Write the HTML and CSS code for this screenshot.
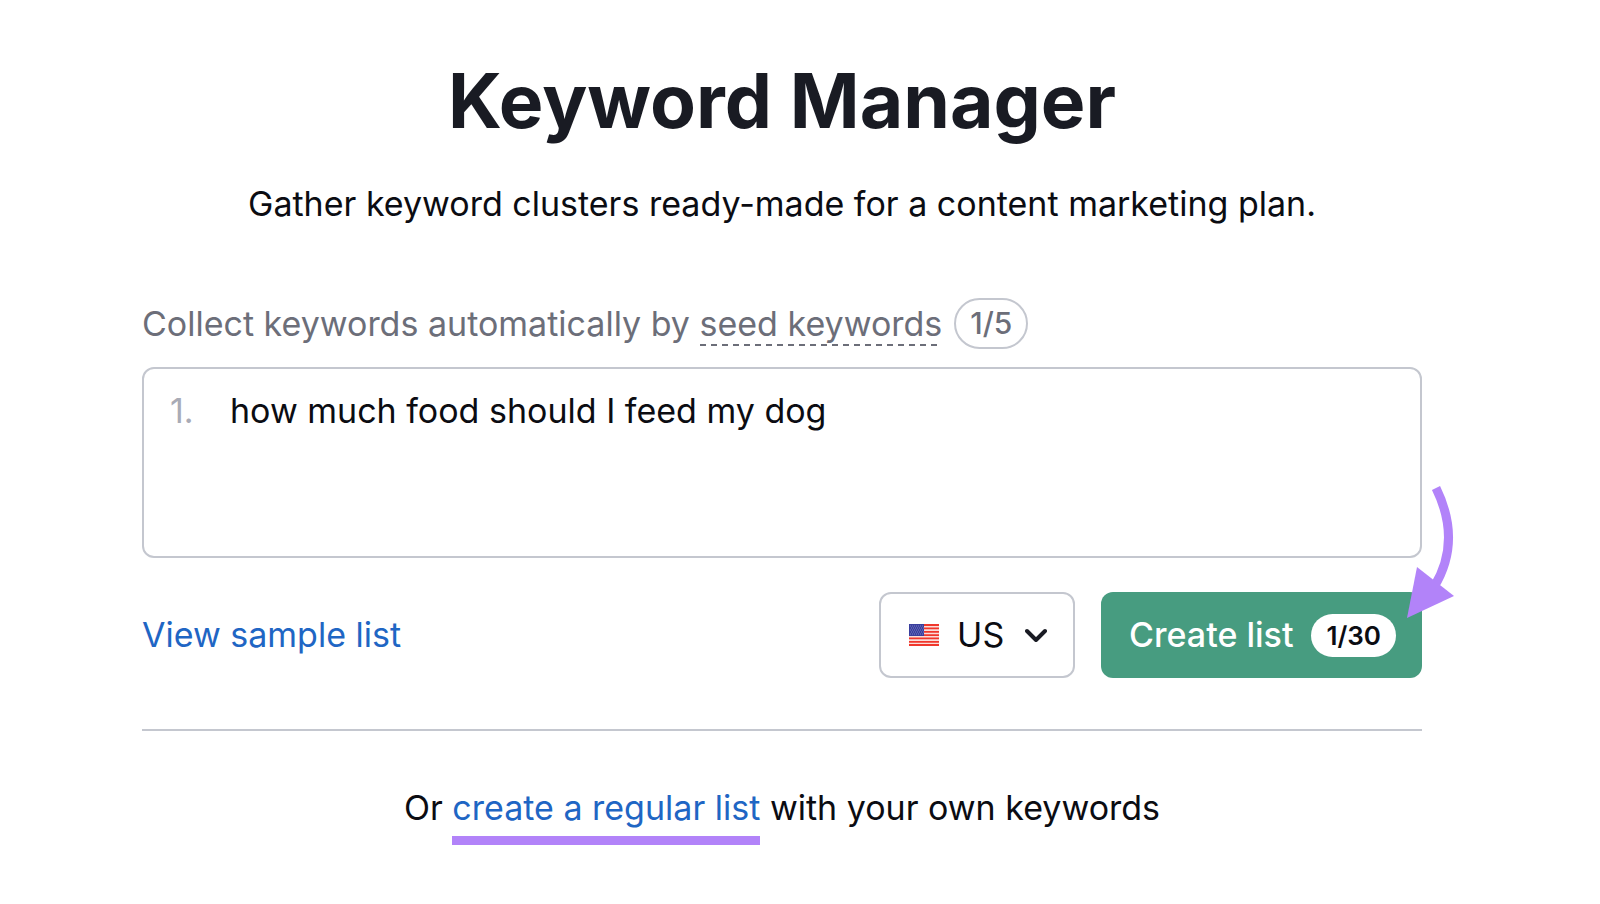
FILE: index.html
```html
<!DOCTYPE html>
<html lang="en">
<head>
    <meta charset="UTF-8">
    <meta name="viewport" content="width=device-width, initial-scale=1.0">
    <title>Keyword Manager</title>
    <link rel="stylesheet" href="styles.css">
</head>
<body>

    <main class="page">
        <h1>Keyword Manager</h1>
        <p class="subtitle">Gather keyword clusters ready-made for a content marketing plan.</p>

        <form class="keyword-form">
            <div class="field-header">
                <label for="keywords">Collect keywords automatically by <span class="hint">seed keywords</span></label>
                <span class="counter">1/5</span>
            </div>

            <div class="keyword-box">
                <span class="line-number">1.</span>
                <textarea id="keywords" rows="3" spellcheck="false">how much food should I feed my dog</textarea>
            </div>

            <div class="actions">
                <a class="sample-link" href="#">View sample list</a>

                <div class="country">
                    <svg class="flag" viewBox="0 0 30 22" aria-hidden="true">
                        <rect width="30" height="22" fill="#fbdcd8"/>
                        <path d="M0 1h30M0 4.4h30M0 7.8h30M0 11.2h30M0 14.4h30M0 17.8h30M0 21h30" stroke="#f0372c" stroke-width="1.8"/>
                        <rect width="15" height="12" fill="#3a3f9e"/>
                        <path d="M1 2h13M2 4h13M1 6h13M2 8h13M1 10h13" stroke="#7d80c4" stroke-width="1" stroke-dasharray="1 1"/>
                    </svg>
                    <select id="country" aria-label="Country">
                        <option>US</option>
                    </select>
                    <svg class="chevron" viewBox="0 0 22 14" aria-hidden="true">
                        <path d="M2 3L11 12L20 3" fill="none" stroke="#191b23" stroke-width="4" stroke-linecap="round" stroke-linejoin="round"/>
                    </svg>
                </div>

                <div class="create">
                    <button type="button">Create list <span class="limit">1/30</span></button>
                    <svg class="arrow" viewBox="0 0 60 145" aria-hidden="true">
                        <path d="M36 9Q62 62 34 108" fill="none" stroke="#b283f9" stroke-width="9"/>
                        <path d="M17 88L54 117L7 139Z" fill="#b283f9"/>
                    </svg>
                </div>
            </div>
        </form>

        <p class="regular">Or <a href="#">create a regular list</a> with your own keywords</p>
    </main>

</body>
</html>
```

FILE: styles.css
```css
* {
    box-sizing: border-box;
}
body {
    margin: 0;
    background-color: #fff;
    color: #0b0c12;
    font-family: Inter, "Liberation Sans", sans-serif;
    font-size: 34px;
    line-height: 44px;
}
.page {
    padding: 52px 178px 40px 142px;
}
h1 {
    margin: 0;
    color: #191b23;
    font-size: 75px;
    font-weight: 700;
    line-height: 98px;
    text-align: center;
}
.subtitle {
    margin: 32px 0 72px;
    text-align: center;
}
a {
    color: #1f66c4;
    text-decoration: none;
}
.field-header {
    display: flex;
    align-items: center;
    gap: 12px;
    color: #6c6e79;
}
.hint {
    display: inline-block;
    background: repeating-linear-gradient(90deg, #6c6e79 0 6px, transparent 6px 11px) bottom / 100% 2px no-repeat;
}
.counter {
    padding: 0 14px;
    border: 2px solid #c4c7cf;
    border-radius: 26px;
    font-size: 30px;
    font-weight: 500;
    line-height: 47px;
}
.keyword-box {
    display: flex;
    margin-top: 18px;
    padding: 20px 26px;
    border: 2px solid #c4c7cf;
    border-radius: 12px;
}
.line-number {
    width: 60px;
    color: #a9abb6;
}
textarea {
    flex: 1;
    height: 147px;
    padding: 0;
    border: none;
    outline: none;
    resize: none;
    color: inherit;
    font: inherit;
}
.actions {
    display: flex;
    align-items: center;
    gap: 26px;
    margin-top: 34px;
    padding-bottom: 51px;
    border-bottom: 2px solid #c4c7cf;
}
.sample-link {
    margin-right: auto;
}
.country {
    display: flex;
    align-items: center;
    height: 86px;
    padding: 0 26px 0 28px;
    border: 2px solid #c4c7cf;
    border-radius: 12px;
}
.flag {
    width: 30px;
    height: 22px;
    margin-right: 18px;
}
select {
    appearance: none;
    padding: 0;
    border: none;
    outline: none;
    background: none;
    color: inherit;
    font: inherit;
}
.chevron {
    width: 22px;
    height: 14px;
    margin-left: 20px;
}
.create {
    position: relative;
}
button {
    display: flex;
    align-items: center;
    gap: 18px;
    height: 86px;
    padding: 0 26px 0 28px;
    border: none;
    border-radius: 12px;
    background-color: #479c80;
    color: #fff;
    font: inherit;
    font-weight: 500;
    cursor: pointer;
}
.limit {
    padding: 0 15px;
    border-radius: 22px;
    background-color: #fff;
    color: #0b0c12;
    font-size: 26px;
    font-weight: 600;
    line-height: 43px;
}
.arrow {
    position: absolute;
    top: -113px;
    right: -38px;
    width: 60px;
    height: 145px;
}
.regular {
    margin: 55px 0 0;
    text-align: center;
}
.regular a {
    display: inline-block;
    padding-bottom: 6px;
    border-bottom: 9px solid #b283f9;
}
```
